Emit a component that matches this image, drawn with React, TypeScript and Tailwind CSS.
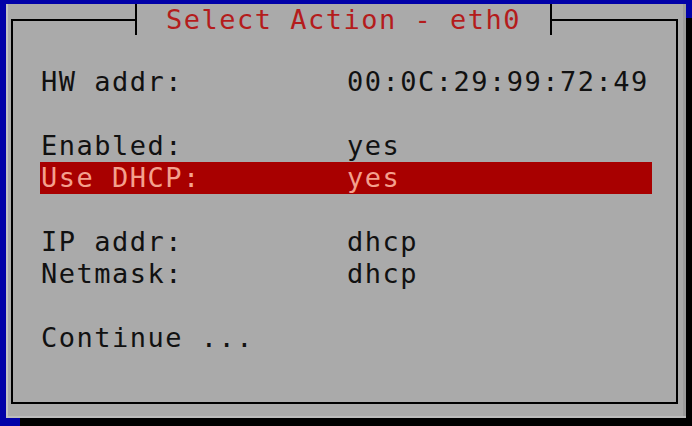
import React from 'react';

const mono = "font-['DejaVu_Sans_Mono','Liberation_Mono',monospace] text-[27px] tracking-[1.5px] leading-[32px]";

type Row = { label: string; value: string; active?: boolean } | null;

const rows: Row[] = [
  { label: 'HW addr:', value: '00:0C:29:99:72:49' },
  null,
  { label: 'Enabled:', value: 'yes' },
  { label: 'Use DHCP:', value: 'yes', active: true },
  null,
  { label: 'IP addr:', value: 'dhcp' },
  { label: 'Netmask:', value: 'dhcp' },
  null,
  { label: 'Continue ...', value: '' },
];

const App: React.FC = () => {
  return (
    <div className="w-[692px] h-[426px] bg-[#0000a8] pt-[4px] pl-[6px] overflow-hidden">
      {/* dialog with hard drop shadow */}
      <div className="w-[680px] h-[414px] bg-[#aaaaaa] pt-[15px] pl-[5px] pr-[8px] pb-[14px] shadow-[14px_14px_0_#000,inset_2px_0_0_#c2c2c2,inset_0_-2px_0_#bcbcbc,inset_-3px_0_0_#9c9c9c]">
        <div className={`relative h-full border-2 border-black pl-[27px] pr-[24px] pt-[45px] text-[#111] ${mono}`}>
          {/* title tab over the frame */}
          <div className="absolute left-[122px] top-[-17px] w-[417px] h-[31px] bg-[#aaaaaa] border-x-2 border-black flex items-center justify-center text-[#b41c1c]">
            Select Action - eth0
          </div>

          {rows.map((r, i) =>
            r ? (
              <div
                key={i}
                className={`flex h-[32px] items-center pl-[1px] whitespace-pre ${
                  r.active ? 'bg-[#a80000] text-[#f4a08e]' : ''
                }`}
              >
                <span className="w-[306px] shrink-0">{r.label}</span>
                <span>{r.value}</span>
              </div>
            ) : (
              <div key={i} className="h-[32px]" />
            )
          )}
        </div>
      </div>
    </div>
  );
};

export default App;
